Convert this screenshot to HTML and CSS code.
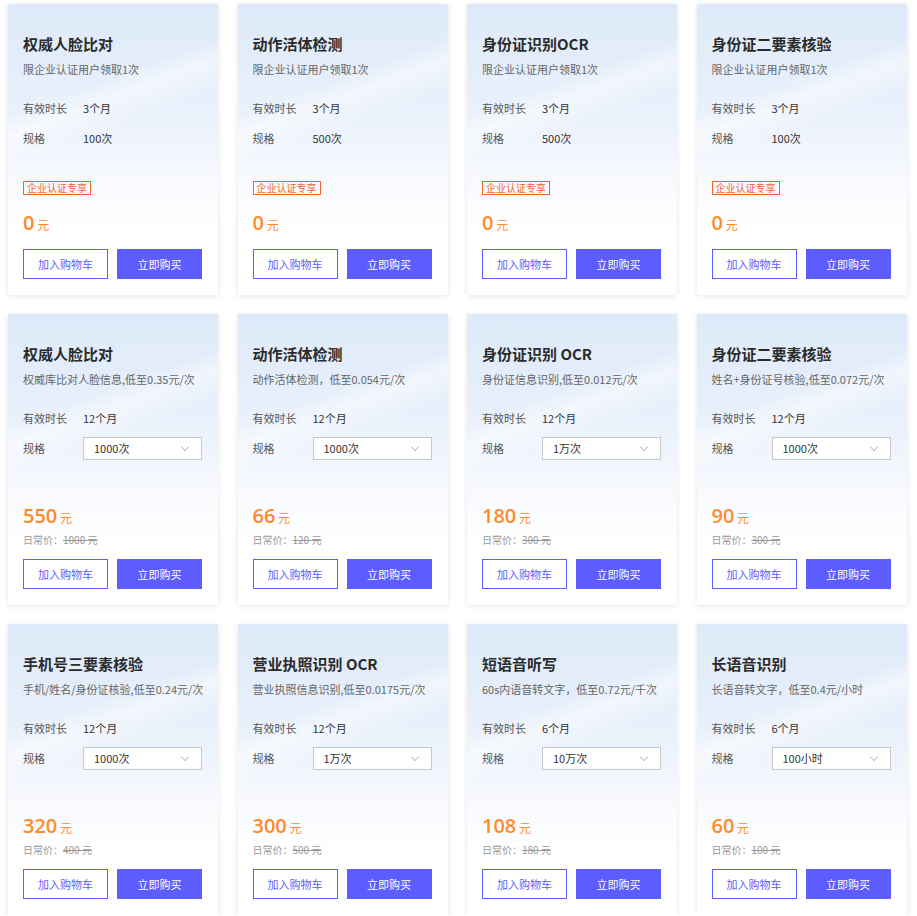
FILE: index.html
```html
<!DOCTYPE html>
<html lang="zh-CN">
<head>
  <meta charset="utf-8">
  <title>套餐购买</title>
  <link rel="stylesheet" href="styles.css">
</head>
<body>
  <div class="grid">
    <!-- 企业认证免费套餐 -->
    <div class="card">
      <div class="title">权威人脸比对</div>
      <div class="desc">限企业认证用户领取1次</div>
      <div class="row"><span class="label">有效时长</span><span>3个月</span></div>
      <div class="row"><span class="label">规格</span><span>100次</span></div>
      <div class="bottom">
        <span class="tag">企业认证专享</span>
        <div class="price"><b>0</b> 元</div>
      </div>
      <div class="btns"><button class="cart">加入购物车</button><button class="buy">立即购买</button></div>
    </div>
    <div class="card">
      <div class="title">动作活体检测</div>
      <div class="desc">限企业认证用户领取1次</div>
      <div class="row"><span class="label">有效时长</span><span>3个月</span></div>
      <div class="row"><span class="label">规格</span><span>500次</span></div>
      <div class="bottom">
        <span class="tag">企业认证专享</span>
        <div class="price"><b>0</b> 元</div>
      </div>
      <div class="btns"><button class="cart">加入购物车</button><button class="buy">立即购买</button></div>
    </div>
    <div class="card">
      <div class="title">身份证识别OCR</div>
      <div class="desc">限企业认证用户领取1次</div>
      <div class="row"><span class="label">有效时长</span><span>3个月</span></div>
      <div class="row"><span class="label">规格</span><span>500次</span></div>
      <div class="bottom">
        <span class="tag">企业认证专享</span>
        <div class="price"><b>0</b> 元</div>
      </div>
      <div class="btns"><button class="cart">加入购物车</button><button class="buy">立即购买</button></div>
    </div>
    <div class="card">
      <div class="title">身份证二要素核验</div>
      <div class="desc">限企业认证用户领取1次</div>
      <div class="row"><span class="label">有效时长</span><span>3个月</span></div>
      <div class="row"><span class="label">规格</span><span>100次</span></div>
      <div class="bottom">
        <span class="tag">企业认证专享</span>
        <div class="price"><b>0</b> 元</div>
      </div>
      <div class="btns"><button class="cart">加入购物车</button><button class="buy">立即购买</button></div>
    </div>

    <!-- 付费套餐 -->
    <div class="card">
      <div class="title">权威人脸比对</div>
      <div class="desc">权威库比对人脸信息,低至0.35元/次</div>
      <div class="row"><span class="label">有效时长</span><span>12个月</span></div>
      <div class="row"><span class="label">规格</span><div class="select">1000次<i class="arrow"></i></div></div>
      <div class="bottom">
        <div class="price"><b>550</b> 元</div>
        <div class="orig">日常价：<s>1000 元</s></div>
      </div>
      <div class="btns"><button class="cart">加入购物车</button><button class="buy">立即购买</button></div>
    </div>
    <div class="card">
      <div class="title">动作活体检测</div>
      <div class="desc">动作活体检测，低至0.054元/次</div>
      <div class="row"><span class="label">有效时长</span><span>12个月</span></div>
      <div class="row"><span class="label">规格</span><div class="select">1000次<i class="arrow"></i></div></div>
      <div class="bottom">
        <div class="price"><b>66</b> 元</div>
        <div class="orig">日常价：<s>120 元</s></div>
      </div>
      <div class="btns"><button class="cart">加入购物车</button><button class="buy">立即购买</button></div>
    </div>
    <div class="card">
      <div class="title">身份证识别 OCR</div>
      <div class="desc">身份证信息识别,低至0.012元/次</div>
      <div class="row"><span class="label">有效时长</span><span>12个月</span></div>
      <div class="row"><span class="label">规格</span><div class="select">1万次<i class="arrow"></i></div></div>
      <div class="bottom">
        <div class="price"><b>180</b> 元</div>
        <div class="orig">日常价：<s>300 元</s></div>
      </div>
      <div class="btns"><button class="cart">加入购物车</button><button class="buy">立即购买</button></div>
    </div>
    <div class="card">
      <div class="title">身份证二要素核验</div>
      <div class="desc">姓名+身份证号核验,低至0.072元/次</div>
      <div class="row"><span class="label">有效时长</span><span>12个月</span></div>
      <div class="row"><span class="label">规格</span><div class="select">1000次<i class="arrow"></i></div></div>
      <div class="bottom">
        <div class="price"><b>90</b> 元</div>
        <div class="orig">日常价：<s>300 元</s></div>
      </div>
      <div class="btns"><button class="cart">加入购物车</button><button class="buy">立即购买</button></div>
    </div>

    <div class="card">
      <div class="title">手机号三要素核验</div>
      <div class="desc">手机/姓名/身份证核验,低至0.24元/次</div>
      <div class="row"><span class="label">有效时长</span><span>12个月</span></div>
      <div class="row"><span class="label">规格</span><div class="select">1000次<i class="arrow"></i></div></div>
      <div class="bottom">
        <div class="price"><b>320</b> 元</div>
        <div class="orig">日常价：<s>400 元</s></div>
      </div>
      <div class="btns"><button class="cart">加入购物车</button><button class="buy">立即购买</button></div>
    </div>
    <div class="card">
      <div class="title">营业执照识别 OCR</div>
      <div class="desc">营业执照信息识别,低至0.0175元/次</div>
      <div class="row"><span class="label">有效时长</span><span>12个月</span></div>
      <div class="row"><span class="label">规格</span><div class="select">1万次<i class="arrow"></i></div></div>
      <div class="bottom">
        <div class="price"><b>300</b> 元</div>
        <div class="orig">日常价：<s>500 元</s></div>
      </div>
      <div class="btns"><button class="cart">加入购物车</button><button class="buy">立即购买</button></div>
    </div>
    <div class="card">
      <div class="title">短语音听写</div>
      <div class="desc">60s内语音转文字，低至0.72元/千次</div>
      <div class="row"><span class="label">有效时长</span><span>6个月</span></div>
      <div class="row"><span class="label">规格</span><div class="select">10万次<i class="arrow"></i></div></div>
      <div class="bottom">
        <div class="price"><b>108</b> 元</div>
        <div class="orig">日常价：<s>180 元</s></div>
      </div>
      <div class="btns"><button class="cart">加入购物车</button><button class="buy">立即购买</button></div>
    </div>
    <div class="card">
      <div class="title">长语音识别</div>
      <div class="desc">长语音转文字，低至0.4元/小时</div>
      <div class="row"><span class="label">有效时长</span><span>6个月</span></div>
      <div class="row"><span class="label">规格</span><div class="select">100小时<i class="arrow"></i></div></div>
      <div class="bottom">
        <div class="price"><b>60</b> 元</div>
        <div class="orig">日常价：<s>100 元</s></div>
      </div>
      <div class="btns"><button class="cart">加入购物车</button><button class="buy">立即购买</button></div>
    </div>
  </div>
</body>
</html>
```

FILE: styles.css
```css
body {
  margin: 0;
  background: #fff;
  font-family: "Noto Sans CJK SC", "Noto Sans", sans-serif;
  color: #333;
}

.grid {
  display: grid;
  grid-template-columns: repeat(4, 210px);
  column-gap: 19.5px;
  row-gap: 19px;
  padding: 4px 0 0 8px;
}

.card {
  height: 291px;
  box-sizing: border-box;
  padding: 29px 16px 16px 15px;
  display: flex;
  flex-direction: column;
  background:
    linear-gradient(160deg, rgba(255, 255, 255, 0) 30%, rgba(255, 255, 255, 0.5) 36%, rgba(255, 255, 255, 0) 44%),
    linear-gradient(180deg, #deeaf9 0%, #e8f0fb 35%, #f7f9fe 60%, #fff 78%);
  box-shadow: 0 1px 6px rgba(0, 0, 0, 0.1);
}

.title {
  font-size: 15px;
  font-weight: bold;
  line-height: 22px;
  color: #2b2b2b;
}

.desc {
  margin-top: 5px;
  font-size: 11px;
  line-height: 18px;
  color: #666;
  white-space: nowrap;
}

.row {
  display: flex;
  align-items: center;
  height: 24px;
  font-size: 11px;
  color: #333;
}

.desc + .row {
  margin-top: 18px;
}

.row + .row {
  margin-top: 6px;
}

.label {
  width: 60px;
  flex: none;
  color: #555;
}

.select {
  flex: 1;
  height: 23px;
  box-sizing: border-box;
  border: 1px solid #c8c8c8;
  background: #fff;
  padding-left: 10px;
  display: flex;
  align-items: center;
  position: relative;
  color: #333;
}

.arrow {
  position: absolute;
  right: 13px;
  top: 6px;
  width: 5px;
  height: 5px;
  border-right: 1px solid #c4c4c4;
  border-bottom: 1px solid #c4c4c4;
  transform: rotate(45deg);
}

.bottom {
  margin-top: auto;
}

.tag {
  display: inline-block;
  height: 14px;
  line-height: 12px;
  box-sizing: border-box;
  border: 1px solid #f0642e;
  color: #f0642e;
  font-size: 10px;
  padding: 0 3px;
  margin-bottom: 14px;
}

.price {
  line-height: 28px;
  height: 28px;
  color: #ff8a2b;
  font-size: 12px;
}

.price b {
  font-size: 20px;
  font-weight: 600;
  font-family: "Open Sans", "Noto Sans", sans-serif;
}

.orig {
  margin-top: 3px;
  line-height: 14px;
  font-size: 10px;
  color: #999;
}

.btns {
  margin-top: 12px;
  display: flex;
  gap: 9px;
}

.btns button {
  width: 85px;
  height: 30px;
  font-family: inherit;
  font-size: 11px;
  cursor: pointer;
  border: 1px solid #5c5cff;
  padding: 0;
}

.cart {
  background: #fff;
  color: #5c5cff;
}

.buy {
  background: #5c5cff;
  color: #fff;
}
```
